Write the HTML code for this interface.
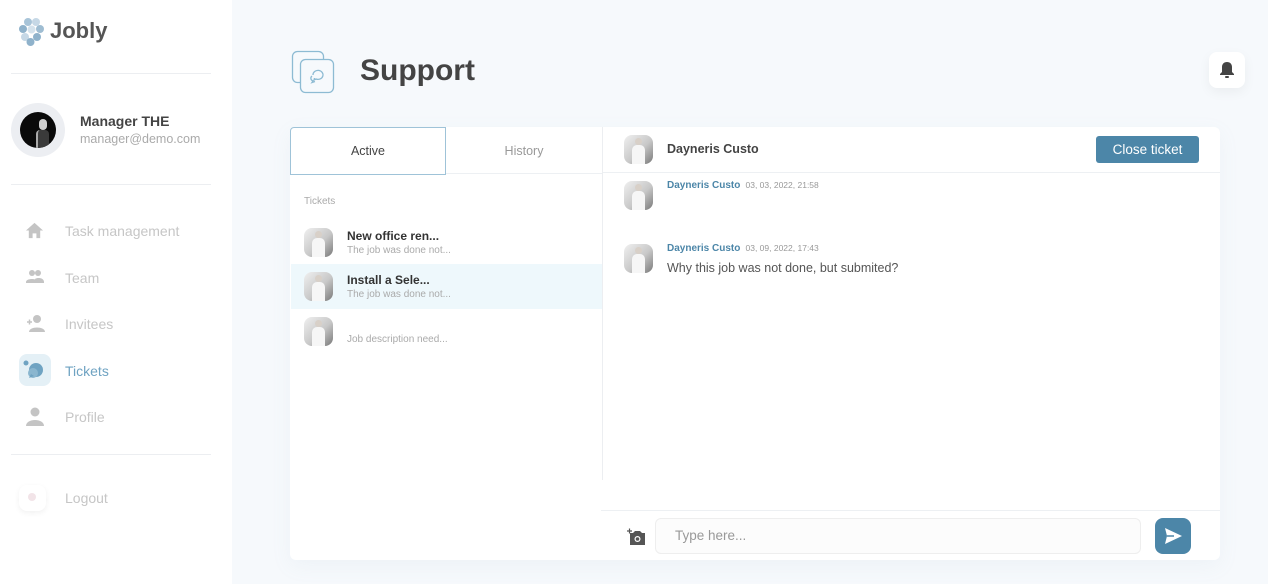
<!DOCTYPE html>
<html><head><meta charset="utf-8"><style>
*{box-sizing:border-box;margin:0;padding:0}
body{width:1268px;height:584px;overflow:hidden;background:#f6f9fc;font-family:"Liberation Sans",sans-serif;position:relative}
.abs{position:absolute}
.side{left:0;top:0;width:232px;height:584px;background:#fff}
.hr{height:1px;background:#eceef1}
.nav{left:65px;font-size:14px;color:#c6c6c6}
.ico{fill:#c4c4c4}
.av{width:29px;height:29px;border-radius:8px;background:linear-gradient(135deg,#f0f0f0,#c8c8c8 55%,#7a7a7a);overflow:hidden;position:absolute}
.av::before{content:"";position:absolute;left:11px;top:3px;width:7px;height:7px;border-radius:50%;background:#d8d0c8}
.av::after{content:"";position:absolute;left:8px;top:10px;width:13px;height:19px;background:#f6f6f6;border-radius:5px 5px 0 0}
.t1{font-size:12px;font-weight:bold;color:#333}
.t2{font-size:10px;color:#aaa}
</style></head><body>
<div class="abs side"></div>
<svg class="abs" style="left:17px;top:17px" width="30" height="30" viewBox="0 0 30 30">
<circle cx="11" cy="5" r="4" fill="#a8c4d8"/><circle cx="19" cy="5" r="4" fill="#c6d8e6"/>
<circle cx="6" cy="12" r="4" fill="#8fb2cb"/><circle cx="14.5" cy="12.5" r="4" fill="#d4e2ec"/><circle cx="23" cy="12" r="4" fill="#9fbdd2"/>
<circle cx="8" cy="20" r="4" fill="#c6d8e6"/><circle cx="20" cy="20" r="4" fill="#8fb2cb"/><circle cx="13.5" cy="25" r="4" fill="#8fb2cb"/>
</svg>
<div class="abs" style="left:50px;top:18px;font-size:22px;font-weight:bold;color:#555">Jobly</div>
<div class="abs hr" style="left:11px;top:73px;width:200px"></div>
<div class="abs" style="left:11px;top:103px;width:54px;height:54px;border-radius:50%;background:#eceef2"></div>
<div class="abs" style="left:20px;top:112px;width:36px;height:36px;border-radius:50%;background:#0a0a0a;overflow:hidden"><div style="position:absolute;left:19px;top:7px;width:8px;height:11px;border-radius:4px;background:#cfcfcf"></div><div style="position:absolute;left:16px;top:18px;width:13px;height:18px;border-radius:4px 4px 0 0;background:#3a3a3a;border-left:2px solid #aaa"></div></div>
<div class="abs" style="left:80px;top:113px;font-size:14px;font-weight:bold;color:#444">Manager THE</div>
<div class="abs" style="left:80px;top:132px;font-size:12.5px;color:#aaa">manager@demo.com</div>
<div class="abs hr" style="left:11px;top:184px;width:200px"></div>
<svg class="abs" style="left:25px;top:221px" width="19" height="19" viewBox="0 0 20 20"><path class="ico" d="M10 2 1 10h3v8h4v-5h4v5h4v-8h3z"/></svg>
<div class="abs nav" style="top:223px">Task management</div>
<svg class="abs" style="left:26px;top:269px" width="18" height="16" viewBox="0 0 18 16"><circle class="ico" cx="6" cy="4" r="3"/><circle class="ico" cx="12" cy="4" r="3"/><path class="ico" d="M0 13c0-4 12-4 12 0v1H0zM9 10c3-2 9-1 9 3v1h-7z"/></svg>
<div class="abs nav" style="top:270px">Team</div>
<svg class="abs" style="left:26px;top:314px" width="19" height="19" viewBox="0 0 19 19"><circle class="ico" cx="11" cy="5" r="4"/><path class="ico" d="M3 18c0-6 16-6 16 0z"/><path d="M1 8h5M3.5 5.5v5" stroke="#c4c4c4" stroke-width="1.5"/></svg>
<div class="abs nav" style="top:316px">Invitees</div>
<div class="abs" style="left:19px;top:354px;width:32px;height:32px;border-radius:8px;background:#e4f0f6"></div>
<svg class="abs" style="left:19px;top:354px" width="32" height="32" viewBox="0 0 32 32"><circle cx="7" cy="9" r="2.5" fill="#6fa3c2"/><circle cx="17" cy="16" r="7" fill="#6fa3c2"/><circle cx="14" cy="19" r="5" fill="#8ab6cf"/><path d="M10 24l2-4 3 2z" fill="#6fa3c2"/></svg>
<div class="abs nav" style="top:363px;color:#6fa3c2">Tickets</div>
<svg class="abs" style="left:26px;top:407px" width="18" height="19" viewBox="0 0 18 19"><circle class="ico" cx="9" cy="5" r="4.5"/><path class="ico" d="M0 19c0-8 18-8 18 0z"/></svg>
<div class="abs nav" style="top:409px">Profile</div>
<div class="abs hr" style="left:11px;top:454px;width:200px"></div>
<div class="abs" style="left:19px;top:485px;width:27px;height:26px;border-radius:8px;background:#fff;box-shadow:0 2px 6px rgba(0,0,0,.06)"></div>
<div class="abs" style="left:28px;top:493px;width:8px;height:8px;border-radius:50%;background:#f2e4e8"></div>
<div class="abs nav" style="top:490px">Logout</div>

<svg class="abs" style="left:291px;top:50px" width="46" height="46" viewBox="0 0 46 46" fill="none" stroke="#8dbbd3" stroke-width="1.3"><rect x="1.5" y="1.5" width="31" height="31" rx="5"/><rect x="9.5" y="9.5" width="33" height="33" rx="5" fill="#f6f9fc"/><path d="M22 25a5 4.5 0 1 1 3 4l-2 1 .5-2"/><path d="M21 26a3.5 3 0 0 0 1 5l-1 1.5 3-1"/></svg>
<div class="abs" style="left:360px;top:54px;font-size:30px;font-weight:bold;color:#444">Support</div>
<div class="abs" style="left:1209px;top:52px;width:36px;height:36px;border-radius:8px;background:#fff;box-shadow:0 4px 12px rgba(0,0,0,.05)"></div>
<svg class="abs" style="left:1219px;top:61px" width="16" height="18" viewBox="0 0 16 18"><path d="M8 1c-3 0-5 2-5 5v5l-2 2v1h14v-1l-2-2V6c0-3-2-5-5-5z" fill="#444"/><rect x="6" y="15" width="4" height="2" rx="1" fill="#444"/></svg>

<div class="abs" style="left:290px;top:127px;width:930px;height:433px;background:#fff;border-radius:6px;box-shadow:0 6px 20px rgba(140,160,190,.08)"></div>
<div class="abs" style="left:290px;top:127px;width:156px;height:48px;border:1.5px solid #9fc3d8;border-radius:4px 0 0 0;text-align:center;line-height:46px;font-size:12.5px;color:#444">Active</div>
<div class="abs" style="left:446px;top:127px;width:156px;height:47px;border-bottom:1px solid #edf0f3;text-align:center;line-height:48px;font-size:12.5px;color:#999">History</div>
<div class="abs" style="left:602px;top:127px;width:1px;height:353px;background:#eceef1"></div>
<div class="abs" style="left:304px;top:196px;font-size:10px;color:#aaa">Tickets</div>
<div class="av" style="left:304px;top:228px"></div>
<div class="abs t1" style="left:347px;top:229px">New office ren...</div>
<div class="abs t2" style="left:347px;top:245px">The job was done not...</div>
<div class="abs" style="left:291px;top:264px;width:311px;height:45px;background:#eef8fc"></div>
<div class="av" style="left:304px;top:272px"></div>
<div class="abs t1" style="left:347px;top:273px">Install a Sele...</div>
<div class="abs t2" style="left:347px;top:289px">The job was done not...</div>
<div class="av" style="left:304px;top:317px"></div>
<div class="abs t2" style="left:347px;top:334px">Job description need...</div>

<div class="abs" style="left:603px;top:172px;width:617px;height:1px;background:#edf0f3"></div>
<div class="av" style="left:624px;top:135px"></div>
<div class="abs" style="left:667px;top:142px;font-size:12.5px;font-weight:bold;color:#444">Dayneris Custo</div>
<div class="abs" style="left:1096px;top:136px;width:103px;height:27px;background:#4c86a8;border-radius:3px;color:#fff;font-size:13.5px;text-align:center;line-height:27px">Close ticket</div>
<div class="av" style="left:624px;top:181px"></div>
<div class="abs" style="left:667px;top:180px;font-size:10px;color:#4c86a8;font-weight:bold">Dayneris Custo <span style="color:#999;font-weight:normal;font-size:8.5px">&nbsp;03, 03, 2022, 21:58</span></div>
<div class="av" style="left:624px;top:244px"></div>
<div class="abs" style="left:667px;top:243px;font-size:10px;color:#4c86a8;font-weight:bold">Dayneris Custo <span style="color:#999;font-weight:normal;font-size:8.5px">&nbsp;03, 09, 2022, 17:43</span></div>
<div class="abs" style="left:667px;top:261px;font-size:12.5px;color:#555">Why this job was not done, but submited?</div>

<div class="abs" style="left:601px;top:510px;width:619px;height:1px;background:#edf0f3"></div>
<svg class="abs" style="left:627px;top:528px" width="19" height="18" viewBox="0 0 19 18"><path d="M3 5h3l2-2h5l2 2h3v12H3z" fill="#555"/><circle cx="10.5" cy="11" r="3" fill="#fff"/><circle cx="10.5" cy="11" r="1.8" fill="#555"/><path d="M0 3h5M2.5 .5v5" stroke="#555" stroke-width="1.2"/></svg>
<div class="abs" style="left:655px;top:518px;width:486px;height:36px;border:1px solid #eeeeee;border-radius:6px;background:#fcfcfc;font-size:13.5px;color:#999;line-height:34px;padding-left:19px">Type here...</div>
<div class="abs" style="left:1155px;top:518px;width:36px;height:36px;border-radius:8px;background:#4c86a8"></div>
<svg class="abs" style="left:1165px;top:528px" width="17" height="16" viewBox="0 0 17 16"><path d="M0 0l17 8-17 8 2-8z" fill="#fff"/><path d="M2 8h7" stroke="#4c86a8" stroke-width="1.5"/></svg>
</body></html>
